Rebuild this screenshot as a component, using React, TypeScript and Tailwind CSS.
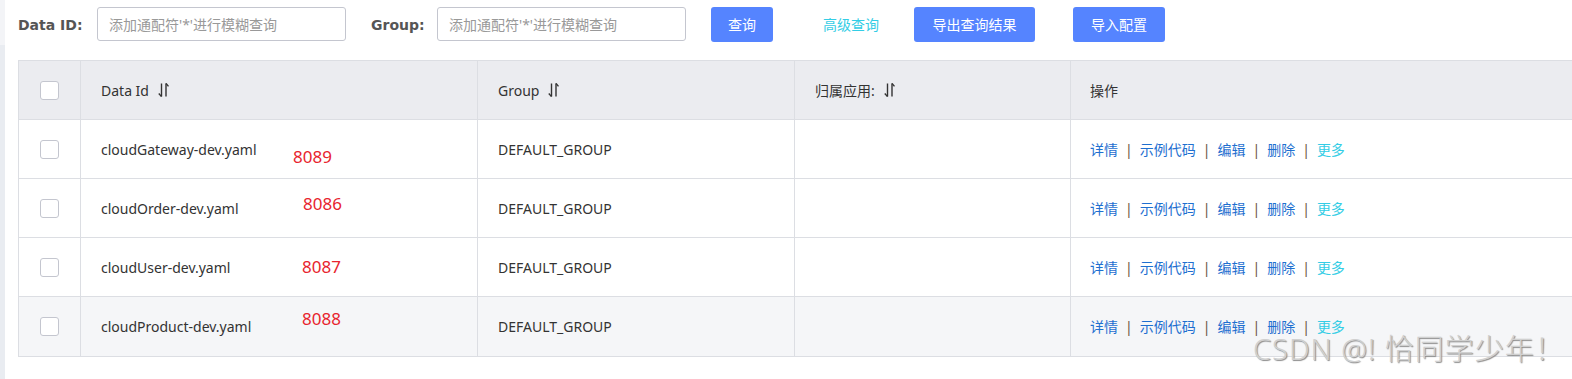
import React from "react";

const font = { fontFamily: '"Noto Sans", "Noto Sans CJK SC", sans-serif' };
const labelFont = { fontFamily: '"DejaVu Sans", "Noto Sans CJK SC", sans-serif' };

function SortIcon() {
  return (
    <svg width="11" height="16" viewBox="0 0 11 16" className="ml-[9px] inline-block" fill="none" stroke="#333" strokeWidth="1.4">
      <path d="M3.5 1.5 V14.5" />
      <path d="M0.8 11.5 L3.5 14.6" />
      <path d="M8 1.5 V14.5" />
      <path d="M8 1.4 L10.5 4.4" />
    </svg>
  );
}

function Checkbox() {
  return <div className="w-[19px] h-[19px] rounded-[3px] border border-[#c4c6cf] bg-white" />;
}

const rows = [
  { id: "cloudGateway-dev.yaml", bg: "bg-white" },
  { id: "cloudOrder-dev.yaml", bg: "bg-white" },
  { id: "cloudUser-dev.yaml", bg: "bg-white" },
  { id: "cloudProduct-dev.yaml", bg: "bg-[#f5f6f8]" },
];

const cols = "grid grid-cols-[62px_397px_317px_276px_1fr]";

function Actions() {
  return (
    <div className="flex items-center text-[14px] text-[#1e6fd0]">
      <span>详情</span>
      <span className="mx-[7px] text-[#6b5444]">|</span>
      <span>示例代码</span>
      <span className="mx-[7px] text-[#6b5444]">|</span>
      <span>编辑</span>
      <span className="mx-[7px] text-[#6b5444]">|</span>
      <span>删除</span>
      <span className="mx-[7px] text-[#6b5444]">|</span>
      <span className="text-[#33cde5]">更多</span>
    </div>
  );
}

export default function App() {
  return (
    <div className="relative flex w-[1572px] h-[379px] bg-white overflow-hidden text-[#333]" style={font}>
      <div className="w-[5px] flex flex-col shrink-0">
        <div className="h-[45px] bg-[#f3f4f7]" />
        <div className="flex-1 bg-[#e9ecf1]" />
      </div>
      <div className="flex-1 pl-[13px] min-w-0">
        <div className="h-[60px] flex items-start pt-[7px]">
          <span className="mt-[8px] text-[14px] font-bold text-[#555] w-[79px] shrink-0" style={labelFont}>Data ID:</span>
          <div className="w-[249px] shrink-0 h-[34px] rounded-[3px] border border-[#c4c6cf] flex items-center pl-[11px] text-[14px] text-[#999]">
            添加通配符'*'进行模糊查询
          </div>
          <span className="mt-[8px] ml-[25px] text-[14px] font-bold text-[#555] w-[66px] shrink-0" style={labelFont}>Group:</span>
          <div className="w-[249px] shrink-0 h-[34px] rounded-[3px] border border-[#c4c6cf] flex items-center pl-[11px] text-[14px] text-[#999]">
            添加通配符'*'进行模糊查询
          </div>
          <div className="ml-[25px] w-[62px] shrink-0 h-[35px] rounded-[3px] bg-[#5584ff] text-white text-[14px] flex items-center justify-center">查询</div>
          <div className="ml-[50px] w-[60px] shrink-0 h-[35px] text-[#33cde5] text-[14px] flex items-center">高级查询</div>
          <div className="ml-[31px] w-[121px] shrink-0 h-[35px] rounded-[3px] bg-[#5584ff] text-white text-[14px] flex items-center justify-center">导出查询结果</div>
          <div className="ml-[38px] w-[92px] shrink-0 h-[35px] rounded-[3px] bg-[#5584ff] text-white text-[14px] flex items-center justify-center">导入配置</div>
        </div>
        <div className="relative w-[1554px] border-t border-l border-b border-[#dcdee3] text-[14px]">
          <div className={`${cols} h-[59px] bg-[#ebecf0] border-b border-[#dcdee3]`}>
            <div className="flex items-center justify-center border-r border-[#dcdee3]"><Checkbox /></div>
            <div className="flex items-center pl-[20px] border-r border-[#dcdee3]">Data Id<SortIcon /></div>
            <div className="flex items-center pl-[20px] border-r border-[#dcdee3]">Group<SortIcon /></div>
            <div className="flex items-center pl-[20px] border-r border-[#dcdee3]">归属应用:<SortIcon /></div>
            <div className="flex items-center pl-[19px]">操作</div>
          </div>
          {rows.map((r, i) => (
            <div key={r.id} className={`${cols} h-[59px] ${r.bg} ${i < rows.length - 1 ? "border-b border-[#dcdee3]" : ""}`}>
              <div className="flex items-center justify-center border-r border-[#dcdee3]"><Checkbox /></div>
              <div className="flex items-center pl-[20px] border-r border-[#dcdee3]">{r.id}</div>
              <div className="flex items-center pl-[20px] border-r border-[#dcdee3]">DEFAULT_GROUP</div>
              <div className="border-r border-[#dcdee3]" />
              <div className="flex items-center pl-[19px]"><Actions /></div>
            </div>
          ))}
          <span className="absolute left-[274px] top-[83px] text-[17px] text-[#e8242e]">8089</span>
          <span className="absolute left-[284px] top-[130px] text-[17px] text-[#e8242e]">8086</span>
          <span className="absolute left-[283px] top-[193px] text-[17px] text-[#e8242e]">8087</span>
          <span className="absolute left-[283px] top-[245px] text-[17px] text-[#e8242e]">8088</span>
        </div>
      </div>
      <div className="absolute left-[1253px] top-[327px] text-[29px] font-light text-[#d0d0d0] tracking-[1px] [text-shadow:1px_1px_1px_#8a8a8a] whitespace-nowrap">
        CSDN @! 恰同学少年！
      </div>
    </div>
  );
}
